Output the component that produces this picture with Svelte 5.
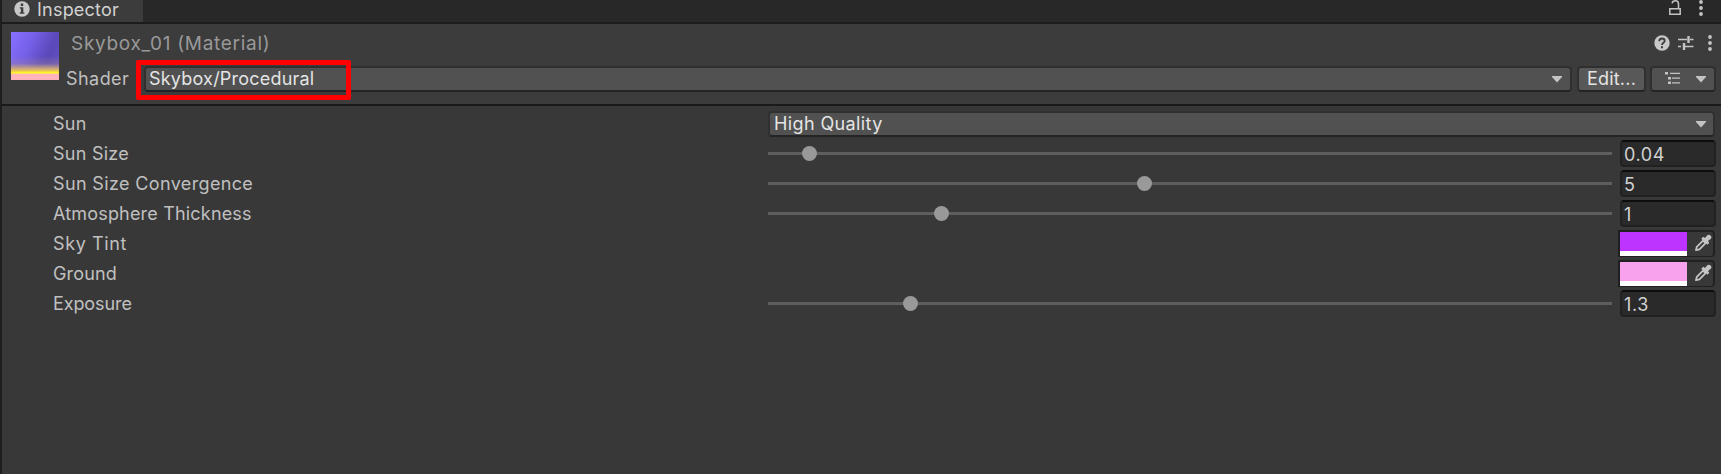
<script>
  const rows = [
    { label: 'Sun', spacing: 0.3, kind: 'select', value: 'High Quality' },
    { label: 'Sun Size', spacing: 0.25, kind: 'slider', value: '0.04', knob: 34 },
    { label: 'Sun Size Convergence', spacing: 0.36, kind: 'slider', value: '5', knob: 369 },
    { label: 'Atmosphere Thickness', spacing: 0.18, kind: 'slider', value: '1', knob: 166 },
    { label: 'Sky Tint', spacing: 0.6, kind: 'color', value: '#bd33ff' },
    { label: 'Ground', spacing: 0.15, kind: 'color', value: '#f8a1ec' },
    { label: 'Exposure', spacing: -0.1, kind: 'slider', value: '1.3', knob: 135 }
  ];
</script>

{#snippet caret()}
  <svg class="caret" width="10" height="7" viewBox="0 0 10 7"><path d="M0 0h10v1L5 6.5 0 1z" fill="#c4c4c4" /></svg>
{/snippet}

{#snippet dots()}
  <svg width="4" height="16" viewBox="0 0 4 16" fill="#c4c4c4"><circle cx="2" cy="2" r="1.9" /><circle cx="2" cy="8" r="1.9" /><circle cx="2" cy="14" r="1.9" /></svg>
{/snippet}

<div class="inspector">
  <div class="tabs">
    <div class="tab">
      <svg width="16" height="16" viewBox="0 0 16 16"><circle cx="8" cy="8" r="7.7" fill="#c8c8c8" /><path d="M6.8 2.6h2.4V5H6.8zM5.8 6.2h3.5v5.2h1.1v1.4H5.6v-1.4h1.3V7.6H5.8z" fill="#3c3c3c" /></svg>
      <span>Inspector</span>
    </div>
    <div class="tabtools">
      <svg width="12" height="16" viewBox="0 0 12 16" fill="none" stroke="#c4c4c4" stroke-width="1.5"><path d="M.8 8.8h10.4v5.5H.8zM9.5 9V4C9.500 1.800 8.300.8 6.400.8S3.400 1.600 3.100 3.400" /></svg>
      {@render dots()}
    </div>
  </div>

  <header>
    <div class="thumb"></div>
    <div class="head">
      <div class="titleline">
        <span class="title">Skybox_01 (Material)</span>
        <div class="tools">
          <svg width="16" height="16" viewBox="0 0 16 16"><circle cx="8" cy="8" r="7.7" fill="#c8c8c8" /><path d="M5.3 6.2C5.3 4.4 6.4 3.5 8 3.5s2.7 1 2.7 2.4C10.700 7.800 8 7.900 8 10" fill="none" stroke="#3c3c3c" stroke-width="1.8" /><path d="M7 11.300h2v2H7z" fill="#3c3c3c" /></svg>
          <svg width="16" height="16" viewBox="0 0 16 16" fill="none" stroke="#c4c4c4"><path d="M0 4.500h9M12 4.500h3.500M0 11.500h3M7 11.500h8.500" stroke-width="1.400" /><path d="M10.500 1v7M6 8v7" stroke-width="2.400" /></svg>
          {@render dots()}
        </div>
      </div>
      <div class="shaderline">
        <span class="slabel">Shader</span>
        <div class="select shader"><span>Skybox/Procedural</span>{@render caret()}<div class="mark"></div></div>
        <div class="button edit">Edit...</div>
        <div class="button preset">
          <svg class="list" width="16" height="12" viewBox="0 0 16 12" fill="#c4c4c4"><path d="M0 0h3v2.500H0zM5 .8h10v1.200H5zM3 5h3v2.500H3zM7 5.500h8v1.200H7zM3 9.500h3V12H3zM7 10.200h8v1.200H7z" /></svg>
          {@render caret()}
        </div>
      </div>
    </div>
  </header>

  <main>
    {#each rows as row}
      <div class="row">
        <span class="label" style:letter-spacing="{row.spacing}px">{row.label}</span>
        {#if row.kind === 'select'}
          <div class="select quality"><span>{row.value}</span>{@render caret()}</div>
        {:else if row.kind === 'slider'}
          <div class="track"><i style:margin-left="{row.knob}px"></i></div>
          <div class="field">{row.value}</div>
        {:else}
          <div class="color">
            <div class="swatch" style:background-color={row.value}></div>
            <svg width="18" height="18" viewBox="0 0 18 18"><path d="M2 16.200l.8-3.400L9 6.600l2.600 2.600-6.200 6.200z" fill="none" stroke="#c4c4c4" stroke-width="1.800" stroke-linejoin="round" /><path d="M7.200 4.700L9.300 2.800l1.700 1.200 2-2.500Q14.800 0 16.500 1.500T16.800 4.800L14 7l1.300 1.700-1.800 2.100z" fill="#c4c4c4" /></svg>
          </div>
        {/if}
      </div>
    {/each}
  </main>
</div>

<style>
  :global(body) { background: #383838; }
  .inspector {
    box-sizing: border-box; height: 474px; display: flex; flex-direction: column;
    background: #383838; border-left: 2px solid #1e1e1e; overflow: hidden;
    font: 18px/24px Inter, sans-serif; letter-spacing: 0.6px; color: #c0c0c0; white-space: nowrap;
  }
  svg { display: block; flex: none; }
  .tabs { height: 22px; flex: none; display: flex; justify-content: space-between; background: #282828; border-bottom: 2px solid #1c1c1c; }
  .tab { width: 141px; display: flex; background: #3c3c3c; }
  .tab svg { margin: 1px 0 0 12px; }
  .tab span { margin: -2px 0 0 7px; color: #d2d2d2; letter-spacing: 0.22px; }
  .tabtools { display: flex; gap: 18px; padding-right: 18px; }
  header { box-sizing: border-box; height: 82px; flex: none; display: flex; background: #3c3c3c; border-bottom: 2px solid #1a1a1a; }
  .thumb {
    width: 48px; height: 48px; margin: 8px 0 0 9px; flex: none;
    background:
      linear-gradient(to bottom, transparent 50%, #a0869860 66%, #c8a480 76%, #e8c850 81%, #fff028 84%, #fff04a 86%, #ffb3ba 88%),
      linear-gradient(115deg, #8870ff 0%, #7560e8 35%, #5f4cc0 62%, #5a49b8 70%, #6954c6 100%);
  }
  .head { flex: 1; display: flex; flex-direction: column; }
  .titleline { display: flex; justify-content: space-between; height: 42px; }
  .title { margin: 8px 0 0 12px; color: #999; font-size: 19px; letter-spacing: 0.7px; }
  .tools { display: flex; gap: 8px; padding: 11px 9px 0 0; }
  .tools svg:last-child { margin-left: 6px; }
  .shaderline { display: flex; height: 26px; line-height: 25px; }
  .slabel { width: 85px; padding-left: 7px; box-sizing: border-box; letter-spacing: 0.45px; }
  .select, .button { box-sizing: border-box; height: 26px; border: 2px solid #303030; border-bottom-color: #242424; border-radius: 4px; background: #515151; color: #e4e4e4; display: flex; align-items: center; justify-content: space-between; }
  .select { line-height: 22px; padding: 0 8px 0 3px; }
  .shader { flex: 1; position: relative; letter-spacing: 0.21px; }
  .mark { position: absolute; left: -10px; top: -8px; width: 205px; height: 30px; border: 5px solid #f00; border-radius: 2px; }
  .button { background: #585858; line-height: 22px; }
  .edit { width: 69px; margin-left: 5px; justify-content: center; letter-spacing: 0.2px; }
  .preset { width: 66px; margin: 0 5px 0 4px; padding: 0 8px 0 13px; background: #515151; }
  .list { margin-bottom: 2px; }
  main { padding: 5px 5px 0 51px; }
  .row { height: 30px; display: flex; }
  .label { width: 715px; flex: none; padding-top: 1px; }
  .quality { flex: 1; margin: 0 1px 0 0; padding: 0 7px 0 4px; letter-spacing: 0.38px; }
  .track { width: 844px; height: 3px; margin-top: 11px; background: #5e5e5e; display: flex; align-items: center; }
  .track i { width: 15px; height: 15px; flex: none; border-radius: 50%; background: #999; }
  .field { box-sizing: border-box; width: 96px; height: 27px; margin: -1px 0 0 auto; padding-left: 2px; border: 2px solid #212121; border-top-color: #0d0d0d; border-radius: 4px; background: #2a2a2a; color: #d2d2d2; line-height: 25px; }
  .color { box-sizing: border-box; width: 97px; height: 27px; margin: -1px 1px 0 auto; border: 2px solid #202020; border-bottom-width: 1px; border-radius: 0 4px 4px 0; display: flex; }
  .swatch { width: 67px; height: 19px; border-bottom: 5px solid #fff; }
  .color svg { margin: 2px 0 0 7px; }
</style>
